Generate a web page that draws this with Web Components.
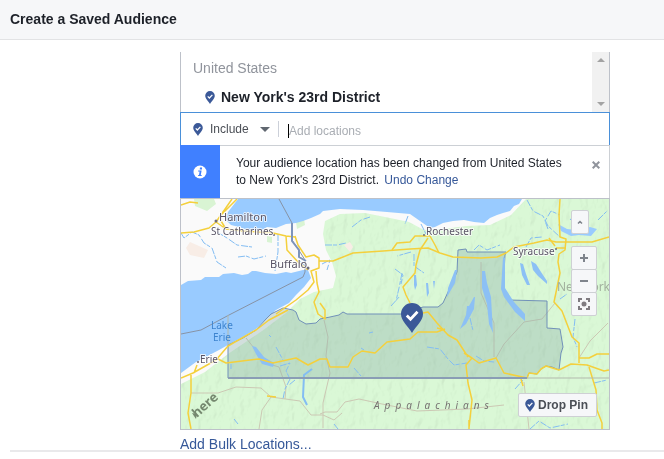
<!DOCTYPE html>
<html lang="en">
<head>
<meta charset="utf-8">
<title>Create a Saved Audience</title>
<style>
  body { margin: 0; background: #fff; color: #1d2129; font: 12px/16px "Liberation Sans", Arial, sans-serif; }
</style>
</head>
<body>
<audience-page></audience-page>

<template id="t-page">
  <style>
    :host { display: block; }
    main { padding: 12px 54px 0 180px; }
    footer { margin-left: 10px; border-top: 2px solid #e9e9eb; }
    .bulk { padding-top: 8px; font-size: 14px; line-height: 12px; }
    a { color: #365899; text-decoration: none; display: block; }
  </style>
  <page-header>Create a Saved Audience</page-header>
  <main>
    <location-list><span slot="country">United States</span>New York's 23rd District</location-list>
    <location-input></location-input>
    <change-notice>Your audience location has been changed from United States to New York's 23rd District.</change-notice>
    <region-map></region-map>
    <div class="bulk"><a href="#bulk">Add Bulk Locations...</a></div>
  </main>
  <footer></footer>
</template>

<template id="t-header">
  <style>
    :host { display: block; background: #f6f7f9; border-bottom: 1px solid #e2e3e5; padding: 10px; }
    h1 { margin: 0; font-size: 14px; line-height: 19px; font-weight: bold; }
  </style>
  <h1><slot></slot></h1>
</template>

<template id="t-pin">
  <style>
    :host { display: inline-block; width: 10px; height: 13px; flex: none; }
    :host([large]) { width: 22px; height: 30px; }
    svg { display: block; width: 100%; height: 100%; }
  </style>
  <svg viewBox="0 0 22 30" aria-hidden="true">
    <path fill="#3b5998" d="M11 0a11 11 0 0 1 11 11c0 7-6.500 11.500-11 19C6.500 22.500 0 18 0 11A11 11 0 0 1 11 0z"/>
    <path fill="none" stroke="#fff" stroke-width="2.800" d="M5.800 12.500l3.700 3.700 7-7.400"/>
  </svg>
</template>

<template id="t-list">
  <style>
    :host { display: flex; border: 1px solid #bdc1c9; border-width: 0 1px; height: 60px; overflow: hidden; font-size: 14px; line-height: 20px; }
    .items { flex: 1; padding: 6px 12px 0; }
    .country { color: #90949c; }
    .place { display: flex; align-items: center; gap: 6px; padding: 9px 0 0 12px; font-weight: bold; }
    .bar { width: 17px; background: #f1f1f1; display: flex; flex-direction: column; justify-content: space-between; }
    button { border: 0; padding: 0; background: none; height: 16px; display: grid; place-items: center; }
    svg { display: block; }
  </style>
  <div class="items">
    <div class="country"><slot name="country"></slot></div>
    <div class="place"><pin-icon></pin-icon><span><slot></slot></span></div>
  </div>
  <div class="bar">
    <button aria-label="Scroll up"><svg width="8" height="4"><path fill="#a3a3a3" d="M0 4l4-4 4 4z"/></svg></button>
    <button aria-label="Scroll down"><svg width="8" height="4"><path fill="#a3a3a3" d="M0 0l4 4 4-4z"/></svg></button>
  </div>
</template>

<template id="t-input">
  <style>
    :host { display: flex; align-items: center; height: 32px; border: 1px solid #4a90d9; border-bottom: 0; padding-left: 12px; background: #fff; }
    .mode { display: grid; grid-template-columns: 68px; align-items: center; padding-left: 7px; border-right: 1px solid #ccd0d9; margin-right: 9px; }
    select { grid-area: 1 / 1; appearance: none; border: 0; padding: 0; margin: 0; width: 60px; background: none; color: #4b4f56; font: inherit; outline: 0; }
    .mode svg { grid-area: 1 / 1; justify-self: end; margin-right: 8px; pointer-events: none; }
    .text { flex: 1; display: flex; align-items: center; padding-top: 3px; }
    .caret { width: 1px; height: 14px; background: #000; }
    input { flex: 1; min-width: 0; border: 0; padding: 0; outline: 0; font: inherit; color: #1d2129; background: none; }
    input::placeholder { color: #a9adb3; opacity: 1; }
  </style>
  <pin-icon></pin-icon>
  <div class="mode">
    <select aria-label="Include or exclude"><option>Include</option><option>Exclude</option></select>
    <svg width="10" height="5"><path fill="#606770" d="M0 0h10L5 5z"/></svg>
  </div>
  <div class="text"><span class="caret"></span><input aria-label="Locations" placeholder="Add locations"></div>
</template>

<template id="t-notice">
  <style>
    :host { display: flex; background: #fff; border-top: 1px solid #ccd0d5; border-right: 1px solid #ccd0d5; }
    .flag { width: 40px; margin-top: -1px; background: #4080ff; display: grid; place-items: center; }
    p { flex: 1; margin: 0; padding: 9px 0 9px 16px; line-height: 17px; color: #1d2129; }
    a { color: #365899; text-decoration: none; margin-left: 2px; }
    button { align-self: flex-start; margin: 15px 9px 0 22px; padding: 0; border: 0; background: none; }
    svg { display: block; }
  </style>
  <div class="flag"><svg width="14" height="14" viewBox="0 0 14 14" aria-hidden="true"><circle cx="7" cy="7" r="6.500" fill="#fff"/><path fill="#4080ff" d="M7 2.500h2v2H6.700zM5.200 5.500h3.400L7.800 10h1L8.600 11H5l.2-1h.8l.6-3.500H5z"/></svg></div>
  <p><slot></slot> <a href="#undo">Undo Change</a></p>
  <button aria-label="Close"><svg width="8" height="8" viewBox="0 0 8 8"><path stroke="#90949c" stroke-width="2" d="M.7.7l6.600 6.600M7.300.7L.7 7.300"/></svg></button>
</template>

<template id="t-map">
  <style>
    :host { display: block; position: relative; border: 1px solid #bdc1c9; font-family: "Noto Sans", sans-serif; }
    .map { display: block; width: 100%; height: auto; }
    text { paint-order: stroke; stroke: #fff; stroke-opacity: .75; stroke-width: 2; stroke-linejoin: round; fill: #5a5566; font-size: 10px; }
    .big { font-size: 11px; }
    .lake { fill: #3d84cf; stroke: none; }
    .range { font-style: italic; letter-spacing: 5px; fill: #757070; stroke: none; }
    .state { font-size: 12px; fill: #a2b09e; stroke: none; }
    .logo { font-size: 13px; font-weight: bold; fill: #75886f; stroke: none; }
    .controls { position: absolute; top: 11px; right: 12px; display: flex; flex-direction: column; align-items: flex-end; }
    button { box-sizing: border-box; padding: 0; border: 1px solid #ced0d4; background: #f6f7f9; border-radius: 2px; display: grid; place-items: center; }
    .up { width: 18px; height: 24px; margin: 0 8px 12px 0; }
    .zoom { width: 26px; height: 24px; margin-bottom: -1px; }
    .drop { position: absolute; right: 12px; bottom: 12px; height: 24px; padding: 0 8px 0 6px; display: flex; align-items: center; gap: 3px; font: bold 12px "Liberation Sans", Arial, sans-serif; color: #4b4f56; }
    .pin { position: absolute; left: 51.500%; top: 45%; }
    pin-icon[large] { display: block; }
  </style>
  <svg class="map" viewBox="181 199 428 230" role="img" aria-label="Map of western New York">
    <defs>
      <filter id="hills" x="0" y="0" width="100%" height="100%" color-interpolation-filters="sRGB">
        <feTurbulence type="fractalNoise" baseFrequency=".12 .07" numOctaves="3" seed="8" result="n"/>
        <feDiffuseLighting in="n" surfaceScale="2" diffuseConstant="1.150" lighting-color="#fff" result="l"><feDistantLight azimuth="215" elevation="60"/></feDiffuseLighting>
        <feComposite in="l" in2="SourceGraphic" operator="in"/>
      </filter>
      <path id="green" d="M609 199V429H181V384L205 372L228 354L262 331L286 313L300 299L314 292L333 288L336 276L332 262L326 250L323 234L325 221L340 214L365 213L390 218L409 222L424 230L443 229L466 226L490 225L511 215L526 199Z"/>
      <path id="district" d="M228 345V378H527L529 373L537 374L541 369L546 366L552 367L559 370L561 353L563 347L560 329L547 328V301L509 300L503 290L505 255L506 252H467L466 249L458 250L457 272L448 292L443 303L438 307H423L402 314H347L343 312L339 315L330 317L320 319L316 323L306 324L299 320L296 312L293 310L283 308L271 314L266 319L256 330L243 338Z"/>
    </defs>
    <rect x="181" y="199" width="428" height="230" fill="#fafafa"/>
    <use href="#green" fill="#daf8d6"/>
    <use href="#green" filter="url(#hills)" opacity=".12" style="mix-blend-mode:multiply"/>
    <g fill="#d9f4d3"><path d="M194 199h20l2 5-9 7-12-5zM267 236l5 1v6l-5-1zM296 222l8-3 1 6-8 4z"/><path fill="#f8ede6" d="M186 248l4-6 18 8-4 8-14-3zM344 245l6-3 3 5-3 5z"/></g>
    <g fill="#99cbff">
      <path d="M238 199L228 212L226 220L231 225L239 227L248 230L262 230L267 227L276 228L286 224L296 223L303 221L311 218L320 214L323 211L340 209L363 210L387 212L410 214L420 221L430 228L435 227L443 223L453 221L464 220L474 222L484 223L490 218L497 215L503 213L510 211L514 206L519 204L522 199Z"/>
      <path d="M181 285L188 281L201 280L205 277L219 277L223 274L234 273L242 275L248 274L252 271L256 271L265 273L276 274L286 272L291 273L303 270L308 270L311 278L304 287L296 295L289 303L276 310L264 321L256 329L243 337L228 345L219 350L196 362L181 373Z"/>
      <path d="M558 224l9 5 9 1 14-3 7 2-6 7-12-1-8 1-10-5z"/>
    </g>
    <g fill="none" stroke="#ccc8b4" stroke-width="1">
      <path d="M191 393h27l18-6 25 1 10 9 29 4 11 14h12l11 5 8-7M271 397l-9 13-3 19M246 338l8 10 8 14 17 5 7 20-1 12M324 320l4 17-2 19 4 17-7 30v25M320 414l5-2h12l8-10 14-3 23 5 35 7 50-2 37-4M481 262v31l13 30v34M496 358l8-14 20-22 18-3 13-16M579 358l11-17 18-18M524 382l5 47"/>
    </g>
    <use href="#district" fill="#8ab0aa" fill-opacity=".36" stroke="#7191b9" stroke-width="1"/>
    <g fill="#8cc0f5"><path d="M482 271h3l2 12 4 14 2 36-4-9-2-20-5-16zM503 257l2 1v30l9 14 11 12v7l-10-9-11-15-3-8zM455 270h2l-2 13-8 14 1-9zM520 263l3 1 3 10 4 11h-3l-5-10zM531 261l5 3 5 8 6 9v3l-9-8-5-6zM474 297h1l-1 12-8 15-6 5 6-14 1-9h2zM252 346l4 1 8 10 10 6-1 4-11-3-6-10zM414 275h2l1 10-2 5-1-5zM426 283h2l1 10-2 4zM433 281h2l-1 8z"/></g>
    <g fill="none" stroke="#83bdf3" stroke-linejoin="round">
      <path stroke-width="2" d="M312 369l-8 6-1 22 4 8"/>
      <path stroke-width="1" stroke-dasharray="7 1 4 2" d="M181 233l3 5 8-6 7 3 5 8 8 5 5 14 9 6M217 232l10 6 10 7 15 2M238 257l8-1 8 3 12-3M278 234v18l-3 19M300 261l10 10M352 227l9-7 9-3M325 245h12l9-2M322 264l8-4-3 10M408 216l-3 8M421 224l5 10M411 252l-14 4M414 254v12l10 7M395 269l8 6-2 9M402 273l-3 15-3 13M474 250l5-5 8 5 13-5M527 200l6 11 10 5 5 10 12 11M548 229l-3-8 6-10 9 4M570 220l8-9 10 3M598 220l10-10M526 247l5-9 11-1M560 299l7-5M575 319l-2 18 4 10M269 335l2 2M276 347l7 13M231 364v5M280 366l10-3-4 8 4 8-5 10-2 10M295 380l-6 5M391 306l9-10M369 333l4-1M361 348l3 2M354 368l7 8M427 347l13 2 8 10 6 6 13-2M470 318l3 13M530 429l9-8 11 7 18-4M594 383l13-3M234 419l4 5M334 424l4 5M515 389l8-9M476 356l8 5 10 1"/>
    </g>
    <g fill="none" stroke="#f4d03c" stroke-width="1.500" stroke-linejoin="round">
      <path d="M181 233l13-1 15-4 7-6 16-23M181 205l9-3 8 1M221 215l16-16M216 222l10 7 17 2 30 2 13 3 9 1M226 229l-5-8M295 236l3 9 8 12 8-2 5 3v10l-8 3 3 11-6 8-12 10-20 14M286 236l1 14 11 12 10 8M316 271l1 12 2 9-5 10 4 12 7 5V310L320 303M319 261h14l20-8 30-2 27-2 18-1 12 5 13 4 28 1 16-1 9-4 8-6 20-4 13-3 9 2h36l17-5"/>
      <path d="M392 250l5-7 13-1 5-6h15l5 9 4 8M428 238l-8 12-4 15-1 8-12 14 3 8 4 8M560 199l-1 16 1 22 6 2-1 11-6 4-1 8 2 11-6 29 8 9 10 26 7 6v20M555 246l-6-8M556 248h10M579 358h10l8-4h12M559 370l12-6 16 1 17 6 5-1M589 367l7 23 1 20 5 13v6"/>
      <path d="M181 378l12-5 23-13 12-14 28-16 13-10 19-10M194 373l3-8M218 359l8 4 33-4 14 4 23-5 12 7 12-6h7l3 8h18l5-10 9-6 13 2 12-11 23-3 8-7h19l8-3M423 313l5-1 9 11 11 12 9 5 11 17M445 330l-8-2M464 353l8 5 7 5 17-5 8 15 23 5 2-5 8 1 4-5 5-3 13 4M472 358l-6 7 2 18 4 17-3 28M521 379l2 7M267 396l9 1M191 375v18l-3 20 3 16M469 420v9"/>
    </g>
    <path fill="none" stroke="#8793a5" stroke-width="1" d="M279 199l13 24v17l8 12 5 8v12l-2 5-74 38-28 15-20 4"/>
    <path fill="none" stroke="#7d94bb" stroke-width="2" d="M292 223v18l7 9v7l7 4"/>
    <path fill="none" stroke="#8a9db5" stroke-width="2" d="M228 378h299"/>
    <path fill="none" stroke="#b2b9ad" d="M527 378h82M228 315v30"/>
    <g fill="#706b78"><circle cx="216" cy="221" r="1.500"/><circle cx="274" cy="235" r="1"/><circle cx="308" cy="268" r="1.500"/><circle cx="424" cy="235" r="1"/><circle cx="556" cy="249" r="1"/><circle cx="198" cy="362" r="1"/></g>
    <text class="big" x="219" y="221">Hamilton</text>
    <text x="211" y="235">St Catharines</text>
    <text class="big" x="270" y="268">Buffalo</text>
    <text x="426" y="235">Rochester</text>
    <text x="513" y="255">Syracuse</text>
    <text x="200" y="363">Erie</text>
    <text class="lake" x="211" y="329">Lake</text>
    <text class="lake" x="213" y="341">Erie</text>
    <text class="range" x="374" y="409">Appalachians</text>
    <text class="state" x="557" y="291">New York</text>
    <text class="logo" transform="translate(197 418) rotate(-42)">here</text>
    <path fill="#75886f" d="M192 413l5 1-1 5z"/>
  </svg>
  <pin-icon class="pin" large></pin-icon>
  <div class="controls">
    <button class="up" aria-label="Collapse"><svg width="6" height="4"><path fill="none" stroke="#7f848c" stroke-width="1.500" d="M1 3.500l2-2 2 2"/></svg></button>
    <button class="zoom" aria-label="Zoom in"><svg width="8" height="8"><path stroke="#7f848c" stroke-width="2" d="M4 0v8M0 4h8"/></svg></button>
    <button class="zoom" aria-label="Zoom out"><svg width="8" height="2"><path fill="#7f848c" d="M0 0h8v2H0z"/></svg></button>
    <button class="zoom" aria-label="Fit to area"><svg width="12" height="12"><path fill="none" stroke="#7f7b80" stroke-width="2" d="M1 4V1h3M8 1h3v3M11 8v3H8M4 11H1V8"/><circle cx="6" cy="6" r="2.500" fill="#7f7b80"/></svg></button>
  </div>
  <button class="drop"><pin-icon></pin-icon>Drop Pin</button>
</template>

<script>
  const define = (name, templateId) => customElements.define(name, class extends HTMLElement {
    constructor() {
      super();
      this.attachShadow({ mode: 'open' })
        .append(document.getElementById(templateId).content.cloneNode(true));
    }
  });
  define('pin-icon', 't-pin');
  define('page-header', 't-header');
  define('location-list', 't-list');
  define('location-input', 't-input');
  define('change-notice', 't-notice');
  define('region-map', 't-map');
  define('audience-page', 't-page');
</script>
</body>
</html>
